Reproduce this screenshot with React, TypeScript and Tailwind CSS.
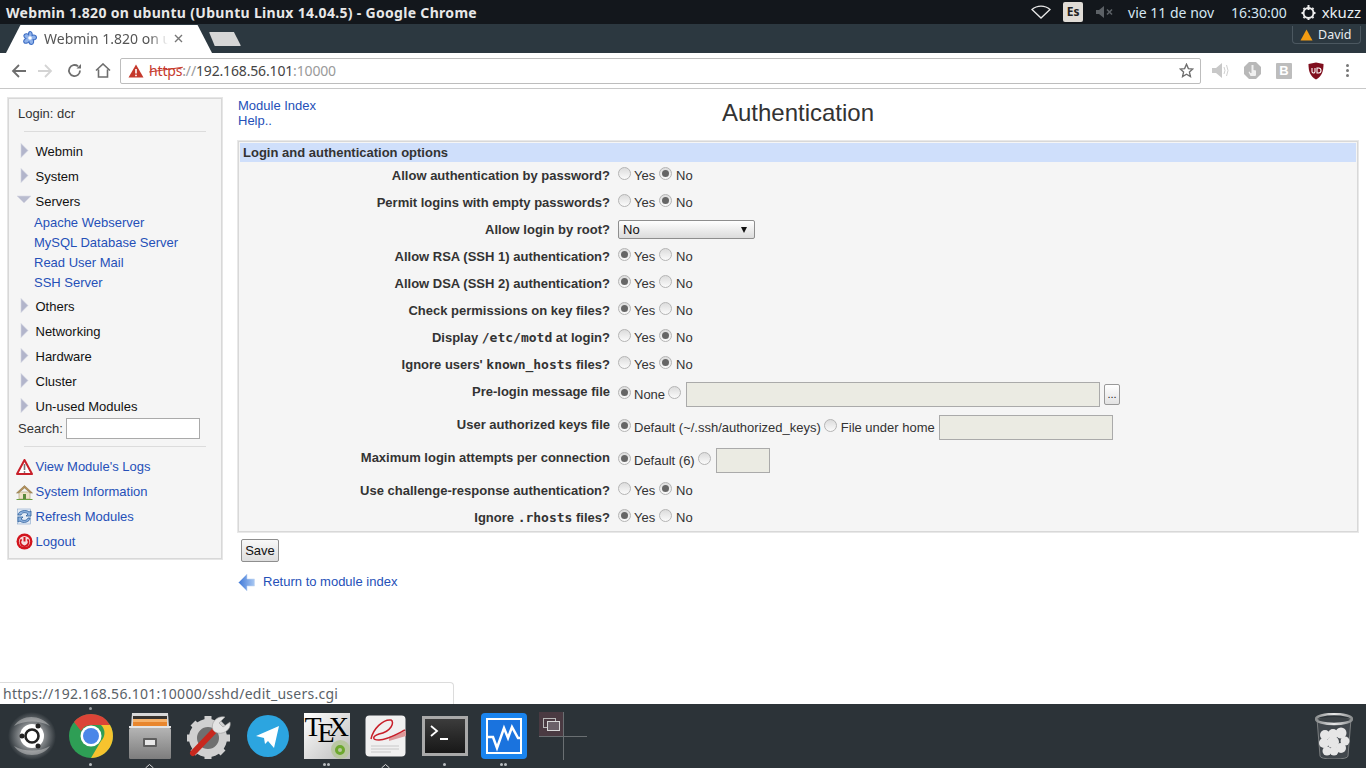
type RadioProps = { on?: boolean };

function Radio({ on }: RadioProps) {
  return (
    <span className="relative mt-[-4px] inline-flex h-[13px] w-[13px] shrink-0 items-center justify-center rounded-full border border-[#b4b4b4] bg-gradient-to-b from-[#dcdcdc] to-[#fbfbfb]">
      {on && <span className="h-[7px] w-[7px] rounded-full bg-[#666]" />}
    </span>
  );
}

function YesNo({ yes }: { yes?: boolean }) {
  return (
    <div className="flex items-center">
      <Radio on={yes} />
      <span className="ml-[3px] w-[25px]">Yes</span>
      <Radio on={!yes} />
      <span className="ml-[4px]">No</span>
    </div>
  );
}

function TextBox({ className }: { className: string }) {
  return <span className={"block h-[25px] border border-[#aaa] bg-[#ebebe3] " + className} />;
}

const mono = "font-['DejaVu_Sans_Mono'] text-[13px]";

function Row({ label, children, inputRow }: { label: React.ReactNode; children: React.ReactNode; inputRow?: boolean }) {
  return (
    <div className={"flex items-center " + (inputRow ? "h-[33px]" : "h-[27px]")}>
      <div className={"w-[370px] text-right font-bold text-[#333] " + (inputRow ? "mt-[-6px]" : "")}>{label}</div>
      <div className="ml-[8px] flex items-center">{children}</div>
    </div>
  );
}

function MenuArrow({ open }: { open?: boolean }) {
  if (open) {
    return (
      <svg width="16" height="9" viewBox="0 0 16 9" className="absolute left-[7px] top-[6px]">
        <path d="M1 1h14L8 8z" fill="#b9bccf" stroke="#d8d9e4" strokeWidth="0.6" />
      </svg>
    );
  }
  return (
    <svg width="9" height="15" viewBox="0 0 9 15" className="absolute left-[11px] top-[4px]">
      <path d="M1 0.5v14l7-7z" fill="#b2b5cb" stroke="#d5d6e2" strokeWidth="0.6" />
    </svg>
  );
}

function MenuItem({ label, open }: { label: string; open?: boolean }) {
  return (
    <div className={"relative flex items-center pl-[26.5px] text-[#111] " + (open ? "h-[24px] pt-[1px]" : "h-[25px]")}>
      <MenuArrow open={open} />
      {label}
    </div>
  );
}

function SideLink({ icon, label }: { icon: React.ReactNode; label: string }) {
  return (
    <div className="flex h-[25px] items-center pl-[7px]">
      <span className="flex h-[18px] w-[19.5px] items-center">{icon}</span>
      {label}
    </div>
  );
}

function Sidebar() {
  const cats = ["Others", "Networking", "Hardware", "Cluster", "Un-used Modules"];
  const subs = ["Apache Webserver", "MySQL Database Server", "Read User Mail", "SSH Server"];
  return (
    <aside className="h-[461px] w-[214px] shrink-0 border border-[#d8d8d8] bg-[#f5f5f5] pt-[5px] text-[13px] outline outline-1 outline-[#e6e6e6]">
      <div className="flex h-[20px] items-center pl-[9px] text-[#333]">Login: dcr</div>
      <div className="mx-[15px] mt-[7px] h-px bg-[#dcdcdc]" />
      <div className="mt-[7px]">
        <MenuItem label="Webmin" />
        <MenuItem label="System" />
        <MenuItem label="Servers" open />
        <div className="mb-[1px] pl-[25px] text-[#2550b8]">
          {subs.map((s) => (
            <div key={s} className="flex h-[20px] items-center">{s}</div>
          ))}
        </div>
        {cats.map((c) => (
          <MenuItem key={c} label={c} />
        ))}
      </div>
      <div className="-mt-[1px] flex h-[21px] items-center pl-[9px] text-[#333]">
        Search:
        <span className="ml-[3px] block h-[21px] w-[134px] border border-[#aaa] bg-white" />
      </div>
      <div className="mx-[15px] mt-[7px] h-px bg-[#dcdcdc]" />
      <div className="mt-[7px] text-[#2550b8]">
        <SideLink icon={<LogIcon />} label="View Module's Logs" />
        <SideLink icon={<HouseIcon />} label="System Information" />
        <SideLink icon={<RefreshIcon />} label="Refresh Modules" />
        <SideLink icon={<LogoutIcon />} label="Logout" />
      </div>
    </aside>
  );
}

function LogIcon() {
  return (
    <svg width="17" height="16" viewBox="0 0 17 16">
      <path d="M8.5 1L16 15H1z" fill="#fff" stroke="#c8202a" strokeWidth="2" strokeLinejoin="round" />
      <path d="M8.5 5v6" stroke="#777" strokeWidth="1.6" />
      <circle cx="8.5" cy="13" r="0.9" fill="#777" />
    </svg>
  );
}

function HouseIcon() {
  return (
    <svg width="17" height="16" viewBox="0 0 17 16">
      <path d="M3 8v7h11V8z" fill="#eee3c8" stroke="#a89a72" strokeWidth="0.6" />
      <path d="M0.5 9L8.5 1.5 16.5 9 14.5 9 8.5 4 2.5 9z" fill="#b5905a" stroke="#7d6a3c" strokeWidth="0.5" />
      <rect x="7" y="10" width="3" height="5" fill="#5b8a3c" />
      <path d="M0.5 15.5h16" stroke="#6aa040" strokeWidth="1" />
    </svg>
  );
}

function RefreshIcon() {
  return (
    <svg width="17" height="17" viewBox="0 0 17 17" fill="none">
      <rect x="1.5" y="1" width="13" height="15" fill="#e6edf6" stroke="#8aa8cc" strokeWidth="0.6" />
      <path d="M2 7c0-4 8-6 11-3l2-1v5h-5l2-2C10 4 6 4 5 7z" fill="#8fb4e0" stroke="#2f5f9a" strokeWidth="0.8" />
      <path d="M14 10c0 4-7 6-10 3l-2 1V9h5l-2 2c2 2 6 2 7-1z" fill="#8fb4e0" stroke="#2f5f9a" strokeWidth="0.8" />
    </svg>
  );
}

function LogoutIcon() {
  return (
    <svg width="17" height="17" viewBox="0 0 17 17" fill="none">
      <circle cx="8.5" cy="8.5" r="8" fill="#d2141c" />
      <circle cx="8.5" cy="8.5" r="5.6" fill="#f6dcdc" />
      <path d="M8.5 4v4.5" stroke="#d2141c" strokeWidth="2" />
      <path d="M5.6 6.4a4 4 0 1 0 5.8 0" stroke="#d2141c" strokeWidth="1.8" />
    </svg>
  );
}

function Panel() {
  return (
    <section className="h-[391px] border border-[#d8d8d8] bg-[#f5f5f5] px-px pt-px outline outline-1 outline-[#e8e8e8]">
      <div className="flex h-[19px] items-center bg-[#cfdffb] pl-[3px] font-bold text-[#333]">Login and authentication options</div>
      <Row label="Allow authentication by password?"><YesNo /></Row>
      <Row label="Permit logins with empty passwords?"><YesNo /></Row>
      <Row label="Allow login by root?">
        <div className="flex h-[19px] w-[137px] items-center justify-between rounded-[2px] border border-[#8e8e8e] bg-gradient-to-b from-white to-[#dcdcdc] pl-[4px] pr-[7px] text-[#111]">
          No
          <svg width="6" height="6" viewBox="0 0 6 6"><path d="M0 0h6L3 6z" fill="#111" /></svg>
        </div>
      </Row>
      <Row label="Allow RSA (SSH 1) authentication?"><YesNo yes /></Row>
      <Row label="Allow DSA (SSH 2) authentication?"><YesNo yes /></Row>
      <Row label="Check permissions on key files?"><YesNo yes /></Row>
      <Row label={<>Display <span className={mono}>/etc/motd</span> at login?</>}><YesNo /></Row>
      <Row label={<>Ignore users' <span className={mono}>known_hosts</span> files?</>}><YesNo /></Row>
      <Row inputRow label="Pre-login message file">
        <Radio on />
        <span className="ml-[3px]">None</span>
        <span className="ml-[3px]"><Radio /></span>
        <TextBox className="ml-[5px] w-[414px]" />
        <span className="ml-[4px] flex h-[21px] w-[16px] items-center justify-center rounded-[2px] border border-[#999] bg-gradient-to-b from-white to-[#e2e2e2] text-[11px] text-[#222]">...</span>
      </Row>
      <Row inputRow label="User authorized keys file">
        <Radio on />
        <span className="ml-[3px]">Default (~/.ssh/authorized_keys)</span>
        <span className="ml-[3px]"><Radio /></span>
        <span className="ml-[4px]">File under home</span>
        <TextBox className="ml-[4px] w-[174px]" />
      </Row>
      <Row inputRow label="Maximum login attempts per connection">
        <Radio on />
        <span className="ml-[3px]">Default (6)</span>
        <span className="ml-[3px]"><Radio /></span>
        <TextBox className="ml-[5px] w-[54px]" />
      </Row>
      <Row label="Use challenge-response authentication?"><YesNo /></Row>
      <Row label={<>Ignore <span className={mono}>.rhosts</span> files?</>}><YesNo yes /></Row>
    </section>
  );
}

function Content() {
  return (
    <div className="ml-[16px] w-[1120px] text-[13px] text-[#333]">
      <header className="relative flex h-[43px] justify-center">
        <div className="absolute left-0 top-0 leading-[15px] text-[#2550b8]">
          <div>Module Index</div>
          <div>Help..</div>
        </div>
        <h1 className="text-[24px] leading-[30px]">Authentication</h1>
      </header>
      <Panel />
      <button className="ml-[3px] mt-[7px] block h-[23px] w-[38px] rounded-[2px] border border-[#8e8e8e] bg-gradient-to-b from-[#f8f8f8] to-[#dedede] text-[#111]">Save</button>
      <div className="mt-[10px] flex h-[20px] items-center text-[#2550b8]">
        <svg width="17" height="19" viewBox="0 0 17 19">
          <defs>
            <linearGradient id="ret" x1="0" x2="1" y1="0" y2="0">
              <stop offset="0" stopColor="#3f78d8" />
              <stop offset="1" stopColor="#a9c8f2" />
            </linearGradient>
          </defs>
          <path d="M0.5 9.5L9 1v5h7.5v7H9v5z" fill="url(#ret)" stroke="#c4d6f2" strokeWidth="0.6" />
        </svg>
        <span className="ml-[8px]">Return to module index</span>
      </div>
    </div>
  );
}

function TopBar() {
  return (
    <div className="flex h-[24px] items-center justify-between bg-[#13171c] font-['Noto_Sans'] text-[#e8e8e8]">
      <span className="pl-[6px] text-[14px] font-bold tracking-[0.31px]">Webmin 1.820 on ubuntu (Ubuntu Linux 14.04.5) - Google Chrome</span>
      <div className="flex items-center pr-[5px] text-[14px] text-[#d5e6f2]">
        <svg width="20" height="14" viewBox="0 0 20 14" fill="none"><path d="M1 4.5C6 0 14 0 19 4.5L10 13z" stroke="#e8e8e8" strokeWidth="1.3" /></svg>
        <span className="ml-[12px] flex h-[20px] w-[20px] items-center justify-center rounded-[2px] bg-[#e0dcd6] text-[12px] font-bold text-[#222]">Es</span>
        <svg className="ml-[13px]" width="18" height="12" viewBox="0 0 18 12"><path d="M0 4h3l5-4v12l-5-4H0z" fill="#5c6166" /><path d="M11 3.5l5 5M16 3.5l-5 5" stroke="#5c6166" strokeWidth="1.6" /></svg>
        <span className="ml-[14px]">vie 11 de nov</span>
        <span className="ml-[17px]">16:30:00</span>
        <svg className="ml-[13px]" width="17" height="17" viewBox="0 0 17 17" fill="none" stroke="#eee">
          <circle cx="8.5" cy="9" r="5" strokeWidth="2" />
          <path d="M8.5 1v5" strokeWidth="2" />
          <path d="M1.5 9H3M14 9h1.5M3.500 14l1-1M12.500 13l1 1M3.500 4l1 1M12.500 5l1-1M8.500 14.500V16" strokeWidth="2" />
        </svg>
        <span className="ml-[5px] text-[15px] text-[#e8eef2]">xkuzz</span>
      </div>
    </div>
  );
}

function TabStrip() {
  return (
    <div className="flex h-[29px] items-end justify-between bg-[#2c3840] font-['Noto_Sans']">
      <div className="flex items-end">
        <div className="ml-[6px] flex h-[28px] w-[206px] items-center bg-white pb-[2px] pl-[16px] [clip-path:polygon(0_100%,7%_0,93%_0,100%_100%)]">
          <svg width="16" height="16" viewBox="0 0 16 16" fill="none">
            <path d="M8 1.500C10 1.500 10.500 4 10 5.500 11.500 4.500 14.500 5 14.500 7.500 14.500 9.500 12 10 11 9.500 12 11 12 14 9.500 14.500 8 14.500 7 13 7 11.500 6 13 3.500 14 2 12.500 1 11 2.500 9 4 8.500 2.500 8 1 6 2.500 4.500 4 3 6 4 6.500 5 6.500 3.500 6.500 1.500 8 1.500z" fill="#8fb2ea" stroke="#3f6fc4" strokeWidth="1.100" strokeLinejoin="round" />
            <circle cx="8" cy="8" r="1.800" fill="#fff" />
          </svg>
          <span className="ml-[6px] w-[124px] overflow-hidden whitespace-nowrap text-[14px] text-[#555] [mask-image:linear-gradient(to_right,black_85%,transparent)]">Webmin 1.820 on ubuntu</span>
          <svg className="ml-[6px]" width="9" height="9" viewBox="0 0 9 9"><path d="M1 1l7 7M8 1L1 8" stroke="#777" strokeWidth="1.400" /></svg>
        </div>
        <div className="mb-[7px] ml-[-3px] h-[14px] w-[32px] rounded-[1px] bg-[#d6d6d6] [clip-path:polygon(0_0,78%_0,100%_100%,18%_100%)]" />
      </div>
      <div className="mb-[9px] mr-[5px] flex h-[18px] w-[69px] items-center rounded-b-[4px] border border-t-0 border-[#4c5860] pl-[7px] pt-[1px] text-[12.500px] text-[#e8ecef]">
        <svg width="13" height="12" viewBox="0 0 13 12"><path d="M6.500 0.500L12.500 11.500H0.500z" fill="#f39c12" /></svg>
        <span className="ml-[5px]">David</span>
      </div>
    </div>
  );
}

function Toolbar() {
  return (
    <div className="flex h-[36px] items-center border-b border-[#c8c8c8] bg-white font-['Noto_Sans']">
      <svg className="ml-[11px]" width="15" height="14" viewBox="0 0 15 14" fill="none" stroke="#6e6e6e" strokeWidth="1.800"><path d="M15 7H2M8 1L2 7l6 6" /></svg>
      <svg className="ml-[12px]" width="15" height="14" viewBox="0 0 15 14" fill="none" stroke="#d4d4d4" strokeWidth="1.800"><path d="M0 7h13M7 1l6 6-6 6" /></svg>
      <svg className="ml-[14px]" width="15" height="15" viewBox="0 0 15 15" fill="none" stroke="#6e6e6e" strokeWidth="1.800"><path d="M13 7.500A5.500 5.500 0 1 1 11 3.300" /><path d="M9.500 5.500H14V1z" fill="#6e6e6e" stroke="none" /></svg>
      <svg className="ml-[13px]" width="16" height="15" viewBox="0 0 16 15" fill="none" stroke="#6e6e6e" strokeWidth="1.600"><path d="M1 7.500L8 1l7 6.500M3.500 6.500V14h9V6.500" /></svg>
      <div className="ml-[9px] flex h-[26px] w-[1081px] items-center rounded-[2px] border border-[#bdbdbd] pl-[7px] pr-[6px] text-[14px] tracking-[-0.16px]">
        <svg width="16" height="14" viewBox="0 0 16 14"><path d="M8 0.500L15.500 13.500H0.500z" fill="#c5392c" /><path d="M8 5v4.500" stroke="#fff" strokeWidth="1.600" /><circle cx="8" cy="11.400" r="0.900" fill="#fff" /></svg>
        <span className="relative ml-[5px] text-[#c5392c]">
          https
          <span className="absolute left-0 right-[-1px] top-[9px] h-px -rotate-[8deg] bg-[#c5392c]" />
        </span>
        <span className="text-[#9a9a9a]">://</span>
        <span className="text-[#444]">192.168.56.101</span>
        <span className="text-[#9a9a9a]">:10000</span>
        <svg className="ml-auto" width="15" height="15" viewBox="0 0 24 24" fill="none" stroke="#6e6e6e" strokeWidth="2.200"><path d="M12 2l3 7 7 .7-5.300 4.800 1.600 7.200L12 18l-6.300 3.700 1.600-7.200L2 9.700 9 9z" /></svg>
      </div>
      <svg className="ml-[11px]" width="17" height="15" viewBox="0 0 17 15" fill="none"><path d="M0 5h4l6-5v15l-6-5H0z" fill="#c8c8c8" /><path d="M12 4q2 3.500 0 7M14.500 2q3 5.500 0 11" stroke="#d0d0d0" /></svg>
      <svg className="ml-[15px]" width="17" height="17" viewBox="0 0 17 17">
        <path d="M5 0h7l5 5v7l-5 5H5l-5-5V5z" fill="#b8b8b8" />
        <path d="M7.500 3h2v5l2.500.5v4.500a1 1 0 0 1-1 1H7a1 1 0 0 1-1-1l-1.500-3 1-.5 1 1.500h1z" fill="#f0f0f0" />
      </svg>
      <span className="ml-[15px] flex h-[16px] w-[16px] items-center justify-center rounded-[1px] bg-[#bdbdbd] font-['Liberation_Sans'] text-[13px] font-bold text-white">B</span>
      <svg className="ml-[16px]" width="16" height="18" viewBox="0 0 16 18"><path d="M0.500 2L8 0.500 15.500 2C15.500 9 14 14.500 8 17.500 2 14.500 0.500 9 0.500 2z" fill="#800f1e" /><path d="M4 6v3.500a1.500 1.500 0 0 0 3 0V6M9 6v5h1.500a2.500 2.500 0 0 0 0-5z" stroke="#fff" strokeWidth="1.100" fill="none" /></svg>
      <span className="ml-[22px] flex flex-col gap-[2px]">
        <span className="h-[3px] w-[3px] rounded-full bg-[#777]" />
        <span className="h-[3px] w-[3px] rounded-full bg-[#777]" />
        <span className="h-[3px] w-[3px] rounded-full bg-[#777]" />
      </span>
    </div>
  );
}

function DockSlot({ children, dots, up }: { children: React.ReactNode; dots?: number; up?: boolean }) {
  return (
    <div className="relative flex h-[64px] w-[59px] items-center justify-center">
      {children}
      {dots ? (
        <div className="absolute bottom-[2px] flex gap-[1px]">
          {Array.from({ length: dots }).map((_, i) => (
            <span key={i} className="h-[3px] w-[3px] rounded-full bg-[#b8bcbf]" />
          ))}
        </div>
      ) : null}
      {up && (
        <svg className="absolute bottom-0" width="9" height="4" viewBox="0 0 9 4" fill="none"><path d="M0.500 4L4.500 0.500 8.500 4" stroke="#d8d8d8" /></svg>
      )}
    </div>
  );
}

function Dock() {
  return (
    <div className="flex h-[64px] items-center bg-[#2c3338] pl-[2px] pr-[13px]">
      <DockSlot>
        <svg width="48" height="48" viewBox="0 0 48 48">
          <defs>
            <radialGradient id="ub"><stop offset="0.3" stopColor="#b0b2b4" /><stop offset="1" stopColor="#2c3338" /></radialGradient>
          </defs>
          <circle cx="24" cy="24" r="24" fill="url(#ub)" />
          <path d="M6 14C14 2 32 2 42 14 32 8 16 8 6 14zM42 34C34 46 14 46 6 34 16 40 32 40 42 34z" fill="#d8d8d8" opacity="0.45" />
          <circle cx="24" cy="24" r="12" fill="#fff" />
          <circle cx="24" cy="24" r="6.500" fill="none" stroke="#222" strokeWidth="2.600" />
          <circle cx="30" cy="14" r="2.500" fill="#222" />
          <circle cx="30" cy="34" r="2.500" fill="#222" />
          <circle cx="14" cy="24" r="2.500" fill="#222" />
        </svg>
      </DockSlot>
      <DockSlot dots={1}>
        <span className="absolute top-[3px] h-[3px] w-[3px] rounded-full bg-[#9a9ea1]" />
        <svg width="44" height="44" viewBox="0 0 44 44">
          <circle cx="22" cy="22" r="22" fill="#2e9e55" />
          <path d="M22 0a22 22 0 0 1 19 11H22a11 11 0 0 0-10 6L5 8A22 22 0 0 1 22 0z" fill="#dc4437" />
          <path d="M41 11a22 22 0 0 1-19 33l10-17a11 11 0 0 0 0-16z" fill="#f7c32e" />
          <circle cx="22" cy="22" r="10.500" fill="#fff" />
          <circle cx="22" cy="22" r="8" fill="#4a86e8" />
        </svg>
      </DockSlot>
      <DockSlot up>
        <svg width="42" height="46" viewBox="0 0 42 46">
          <defs>
            <linearGradient id="drawer" x1="0" x2="0" y1="0" y2="1">
              <stop offset="0" stopColor="#b4b4b4" />
              <stop offset="1" stopColor="#7d7d7d" />
            </linearGradient>
          </defs>
          <path d="M3 0h36l1 14H2z" fill="#d8d8d8" />
          <rect x="4" y="3" width="34" height="9" fill="#38332e" />
          <rect x="4" y="6" width="34" height="3" fill="#f6b26b" />
          <rect x="4" y="9" width="34" height="4" fill="#e8862e" />
          <rect x="0" y="13" width="42" height="2" fill="#e4e4e4" />
          <rect x="0" y="15" width="42" height="31" rx="1.500" fill="url(#drawer)" />
          <rect x="14" y="25" width="14" height="9" rx="1" fill="#5e5e5e" />
          <rect x="16" y="27" width="10" height="5" fill="#e8e8e8" />
        </svg>
      </DockSlot>
      <DockSlot>
        <svg width="44" height="46" viewBox="0 0 44 46" fill="none">
          <circle cx="21" cy="25" r="15" fill="#6f6f6f" stroke="#d0d0d0" strokeWidth="8" />
          <path d="M21 3v8M21 39v7M0 25h7M35 25h8M6 10l5 5M31 35l5 5M6 40l5-5M31 15l5-5" stroke="#d0d0d0" strokeWidth="7" />
          <path d="M6 40L29 16" stroke="#c8281e" strokeWidth="6" strokeLinecap="round" />
          <path d="M26 17c-3-7 4-15 12-13l-6 6 4 4 7-5c2 8-8 14-15 10z" fill="#e4e4e4" stroke="#9a9a9a" strokeWidth="0.600" />
        </svg>
      </DockSlot>
      <DockSlot>
        <svg width="42" height="42" viewBox="0 0 42 42">
          <circle cx="21" cy="21" r="21" fill="#2ca5e0" />
          <path d="M9 21L32 11l-5 22-6-7-3 3-1-6z" fill="#fff" />
        </svg>
      </DockSlot>
      <DockSlot dots={2}>
        <div className="relative h-[46px] w-[46px] bg-gradient-to-br from-white to-[#bdbdbd] text-black">
          <span className="block whitespace-nowrap pl-[1px] font-['Liberation_Serif'] text-[28px] leading-[28px]">
            T<span className="relative top-[6px] -ml-[4px] -mr-[6px]">E</span>X
          </span>
          <span className="absolute bottom-0 right-0 flex h-[19px] w-[19px] items-center justify-center rounded-full bg-[#b9c7a2]">
            <span className="h-[10px] w-[10px] rounded-full border-[3px] border-[#6da82f]" />
          </span>
        </div>
      </DockSlot>
      <DockSlot up>
        <svg width="41" height="42" viewBox="0 0 41 42" fill="none">
          <rect x="0.500" y="0.500" width="40" height="41" rx="4" fill="#f0f0f0" />
          <path d="M24 22l17-6v5l-17 5z" fill="#dc9a9a" />
          <path d="M6 24c2-10 12-20 20-19 4 2 0 12-12 14-6 2-8 6 0 6 8 0 18-6 26-10" stroke="#c8202a" strokeWidth="1.500" />
          <path d="M6 31h28M6 34h28M6 37h20" stroke="#c8c8c8" />
        </svg>
      </DockSlot>
      <DockSlot dots={1}>
        <div className="h-[40px] w-[46px] border-[3px] border-[#a9a9a9] bg-gradient-to-b from-[#3c3c3c] to-[#181818] px-[5px] pt-[6px]">
          <svg width="20" height="16" viewBox="0 0 20 16" fill="none" stroke="#fff" strokeWidth="1.800"><path d="M1 1l6 5-6 5M10 14h8" /></svg>
        </div>
      </DockSlot>
      <DockSlot dots={2}>
        <div className="h-[46px] w-[46px] rounded-[4px] bg-[#1a84ee] p-[5px]">
          <svg className="h-full w-full" viewBox="0 0 36 36" fill="none">
            <rect width="36" height="36" fill="#1a73de" />
            <path d="M0 19h7l4 11 7-20 4 10 4-11 6 11h4" stroke="#fff" strokeWidth="2.500" />
            <path d="M1 1h34v34H1z" stroke="#fff" strokeWidth="2" />
          </svg>
        </div>
      </DockSlot>
      <DockSlot>
        <div className="relative h-[48px] w-[48px]">
          <span className="absolute left-0 top-0 h-[24px] w-[24px] bg-[#4a3a42]">
            <span className="absolute left-[4px] top-[6px] h-[10px] w-[13px] border border-[#b8b8b8]" />
            <span className="absolute left-[8px] top-[9px] h-[10px] w-[13px] border border-[#d8d8d8] bg-[#6a6068]" />
          </span>
          <span className="absolute left-[24px] top-0 h-[48px] w-px bg-[#6a6f72]" />
          <span className="absolute left-0 top-[24px] h-px w-[48px] bg-[#6a6f72]" />
        </div>
      </DockSlot>
      <div className="ml-auto flex h-[50px] w-[38px] items-center justify-center">
        <svg width="38" height="46" viewBox="0 0 38 46">
          <defs>
            <linearGradient id="rim" x1="0" x2="1" y1="0" y2="0">
              <stop offset="0" stopColor="#8a8d8e" />
              <stop offset="0.5" stopColor="#e8e8e8" />
              <stop offset="1" stopColor="#8a8d8e" />
            </linearGradient>
          </defs>
          <path d="M2 6l3 37q0 3 14 3t14-3l3-37z" fill="#ffffff" fillOpacity="0.1" stroke="#8a8d8e" strokeWidth="0.800" />
          <g fill="#e6e6e6">
            <circle cx="10" cy="22" r="5" />
            <circle cx="18" cy="21" r="5" />
            <circle cx="26" cy="20" r="5.500" />
            <circle cx="30" cy="28" r="4.500" />
            <circle cx="9" cy="30" r="5" />
            <circle cx="18" cy="29" r="6" />
            <circle cx="26" cy="35" r="5" />
            <circle cx="12" cy="38" r="4.500" />
            <circle cx="19" cy="38" r="4.500" />
          </g>
          <ellipse cx="19" cy="6" rx="18" ry="5" fill="none" stroke="url(#rim)" strokeWidth="2.500" />
          <ellipse cx="19" cy="6.500" rx="15" ry="2.500" fill="#3c4246" />
        </svg>
      </div>
    </div>
  );
}

export default function App() {
  return (
    <div className="relative flex h-[768px] w-[1366px] flex-col overflow-hidden bg-white font-['Liberation_Sans',sans-serif]">
      <TopBar />
      <TabStrip />
      <Toolbar />
      <main className="flex flex-1 pl-[8px] pt-[9px]">
        <Sidebar />
        <Content />
      </main>
      <div className="absolute bottom-[64px] left-0 flex h-[22px] w-[454px] items-center rounded-tr-[4px] border-r border-t border-[#dcdcdc] bg-white pl-[3px] font-['Noto_Sans'] text-[14px] tracking-[0.27px] text-[#5a6268]">
        https://192.168.56.101:10000/sshd/edit_users.cgi
      </div>
      <Dock />
    </div>
  );
}
